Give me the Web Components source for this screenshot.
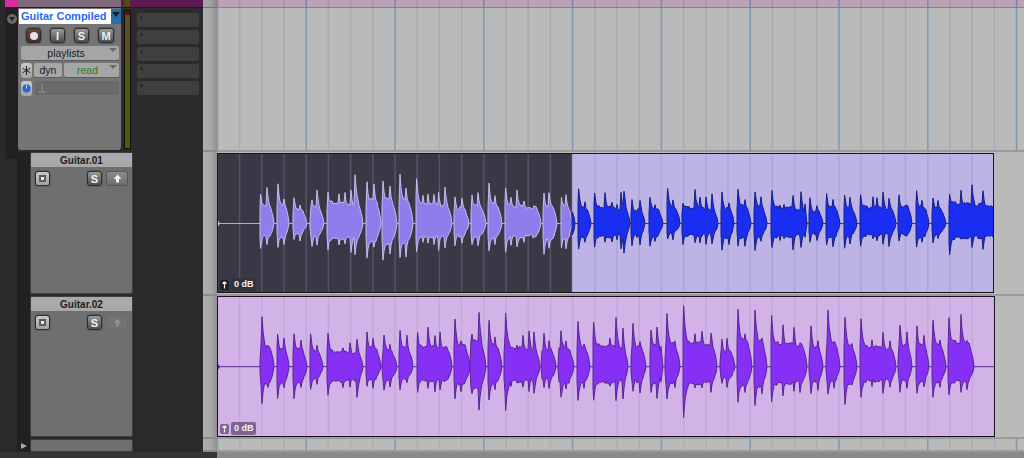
<!DOCTYPE html>
<html>
<head>
<meta charset="utf-8">
<style>
    html, body { margin: 0; padding: 0; background: #2a2a2a; overflow: hidden; }
</style>
</head>
<body>
<edit-window>
    <top-strip></top-strip>

    <track-row style="--row-height: 144px">
        <main-track slot="head" name="Guitar Compiled"></main-track>
        <grid-lines slot="lane" major="#7f9bb3" minor="#a7adb3"></grid-lines>
    </track-row>

    <track-row style="--row-height: 144px">
        <sub-track slot="head" name="Guitar.01" tail></sub-track>
        <audio-clip slot="lane" wave="one" style="--clip-bottom: 1px; --clip-right: 30px">
            <gain-badge style="--badge-bg: #1f1f24; --label-bg: #34323c"></gain-badge>
        </audio-clip>
    </track-row>

    <track-row style="--row-height: 143px">
        <sub-track slot="head" name="Guitar.02" dim></sub-track>
        <audio-clip slot="lane" wave="two" style="--clip-bottom: 0px; --clip-right: 29px; --clip-top: 0px">
            <gain-badge style="--badge-bg: #7f6491; --label-bg: #7f6491"></gain-badge>
        </audio-clip>
    </track-row>

    <track-row style="--row-height: 13px">
        <mini-head slot="head"></mini-head>
        <grid-lines slot="lane" major="#7f9bb3" minor="#aab0b5"></grid-lines>
    </track-row>

    <bottom-bar></bottom-bar>
</edit-window>

<script>
// grid positions are page x, lanes start at 217
const LANE_X = 217;
const GRID_START = 217.4;
const GRID_STEP = 22.2;

// [start, end, [peak x, up, down], ...]
const WAVES = {
    one: {
        center: 70.5,
        parts: [
            {
                from: 217, to: 572, bg: '#3b3846', grid: '#55526a', fill: '#917cec', stroke: '#c4bbf0', line: '#b4aadf',
                bursts: [
                    [260, 274, [260.6, 30, 25], [267, 35, 20]],
                    [277, 289, [278, 41, 25], [284, 23, 20]],
                    [293, 307, [294, 27, 16], [300, 18, 16]],
                    [310, 324, [312, 23, 22], [317, 32, 20]],
                    [327, 363, [328, 30, 25], [339, 30, 22], [345, 30, 20], [351, 34, 30], [355, 49, 30]],
                    [366, 381, [367, 42, 35], [374, 38, 23]],
                    [382, 397, [383, 44, 37], [390, 37, 30]],
                    [399, 413, [400, 48, 33], [406, 34, 32]],
                    [416, 452, [416.6, 44, 27], [423, 30, 20], [428, 30, 20], [434, 29, 20], [438.5, 33, 27], [445, 35, 23]],
                    [454, 469, [455, 28, 23], [462, 24, 18]],
                    [471, 486, [472, 29, 22], [478, 30, 21]],
                    [488, 502, [489, 39, 27], [495, 26, 20]],
                    [505, 541, [505.6, 34, 27], [511, 27, 22], [517, 35, 25], [524, 22, 18]],
                    [543, 557, [544, 31, 32], [549, 30, 23]],
                    [561, 572, [561.5, 28, 23], [566, 28, 25]]
                ]
            },
            {
                from: 572, to: 994, bg: '#bdb3e5', grid: '#aba5d6', fill: '#1a2ef2', stroke: '#141f86', line: '#3a3a80',
                bursts: [
                    [572, 575, [572.5, 12, 12]],
                    [578, 591, [578.6, 34, 25], [585, 20, 20]],
                    [594, 630, [594.6, 29, 22], [605, 32, 20], [612, 20, 18], [617, 20, 18], [621, 32, 27], [624, 32, 28]],
                    [631, 645, [632, 24, 23], [640, 23, 20]],
                    [649, 663, [650, 28, 23], [655, 18, 17]],
                    [667, 680, [667.6, 35, 15], [673, 22, 15]],
                    [682, 718, [683, 20, 20], [695, 34, 20], [700, 25, 18], [706, 27, 21], [712, 28, 20]],
                    [721, 734, [722, 32, 28], [729, 20, 20]],
                    [737, 751, [738, 36, 23], [745, 23, 22]],
                    [754, 767, [755, 33, 26], [761, 25, 17]],
                    [771, 807, [772, 32, 24], [780, 20, 18], [784, 20, 17], [793, 28, 27], [801, 30, 23], [805, 33, 23]],
                    [809, 823, [810, 26, 20], [817, 17, 16]],
                    [826, 840, [826.6, 31, 22], [833, 24, 23]],
                    [844, 857, [844.6, 27, 23], [850, 25, 19]],
                    [860, 896, [860.6, 28, 22], [873, 27, 17], [877, 25, 17], [883, 33, 22], [889, 26, 22]],
                    [898, 912, [899, 30, 19]],
                    [916, 929, [916.6, 33, 25], [922, 22, 18]],
                    [932, 946, [933, 27, 19], [938, 22, 14]],
                    [949, 999, [949.6, 28, 30], [961, 34, 17], [972, 40, 25], [983, 32, 25]]
                ]
            }
        ]
    },
    two: {
        center: 70.7,
        parts: [
            {
                from: 217, to: 995, bg: '#d1b3e8', grid: '#c3a7da', fill: '#8630f5', stroke: '#5a2496', line: '#5a2496',
                bursts: [
                    [260, 274, [262, 50, 37], [268, 20, 20]],
                    [277, 289, [277.6, 34, 33], [284, 27, 20]],
                    [293, 307, [294, 34, 32], [301, 25, 20]],
                    [310, 323, [310.6, 32, 22], [317, 20, 16]],
                    [327, 363, [328, 32, 27], [343, 18, 20], [350, 25, 21], [357, 27, 30]],
                    [366, 381, [367, 35, 20], [373, 28, 20]],
                    [382, 397, [384, 32, 23], [390, 22, 20]],
                    [399, 413, [400, 35, 22], [407, 30, 17]],
                    [417, 452, [417.6, 33, 25], [428, 40, 22], [435, 30, 24], [440, 35, 25]],
                    [454, 470, [455, 49, 33], [461, 25, 24]],
                    [470, 486, [472, 33, 28], [479, 53, 42]],
                    [488, 502, [489, 45, 33], [495, 28, 22]],
                    [504, 540, [505.6, 52, 42], [511, 20, 20], [517, 23, 18], [523, 30, 20], [529, 37, 25], [534, 33, 26]],
                    [541, 556, [544, 34, 22], [549, 25, 20]],
                    [558, 574, [561, 37, 32], [566, 25, 22]],
                    [577, 590, [578, 44, 33], [584, 22, 20]],
                    [593, 628, [593.6, 43, 32], [605, 22, 18], [610, 27, 18], [616, 50, 35], [623, 38, 32]],
                    [631, 646, [633, 44, 26], [640, 25, 25]],
                    [650, 663, [651, 37, 25], [657, 38, 30], [661, 33, 25]],
                    [665, 680, [667, 52, 32], [675, 27, 22]],
                    [683, 717, [683.6, 60, 50], [695, 33, 22], [702, 35, 20], [711, 35, 24]],
                    [720, 735, [722, 28, 18], [727, 27, 20]],
                    [737, 752, [738, 59, 36], [745, 32, 25]],
                    [754, 767, [755, 58, 38], [762, 28, 27]],
                    [771, 807, [771.6, 50, 35], [783, 43, 30], [794, 40, 25], [800, 25, 24]],
                    [809, 823, [811, 42, 28], [818, 25, 22]],
                    [826, 840, [828, 57, 28], [834, 25, 20]],
                    [844, 857, [845, 48, 36], [852, 22, 20]],
                    [860, 896, [861, 47, 30], [872, 28, 20], [883, 36, 28], [890, 25, 20]],
                    [898, 912, [900, 43, 26], [907, 33, 20]],
                    [916, 929, [917, 41, 28], [924, 31, 20]],
                    [932, 946, [933, 48, 30], [940, 25, 20]],
                    [948, 974, [949, 48, 27], [961, 53, 27], [967, 25, 22]]
                ]
            }
        ]
    }
};

// fixed noise so every run gives the same wave
function jitter(x) {
    return Math.sin(x * 12.9898) * 43758.5453 % 1;
}

function burstHeight(burst, x, side) {
    const [x0, x1, ...peaks] = burst;
    const avg = peaks.reduce((sum, p) => sum + p[side], 0) / peaks.length;
    const span = x1 - x0;
    const t = (x - x0) / span;
    const attack = Math.min(1, Math.max(0, (x - x0) / 0.7));
    const taper = Math.pow(Math.min(1, Math.max(0, (x1 - x) / Math.min(5, span * 0.32))), 0.6);
    let h = avg * 0.62 * attack * (1 - 0.15 * t);
    for (const p of peaks) {
        const dx = x - p[0];
        const spike = dx < 0
            ? Math.exp(dx / 1.1)
            : 0.3 * Math.exp(-dx / 1.1) + 0.7 * Math.exp(-dx / 7);
        h = Math.max(h, p[side] * spike);
    }
    return Math.max(0, (h + jitter(Math.round(x) + side) * 1.8) * taper);
}

function burstPath(burst, center) {
    const [x0, x1, ...peaks] = burst;
    const xs = peaks.map(p => p[0]);
    for (let x = Math.ceil(x0); x <= x1; x++) {
        if (!xs.some(px => Math.abs(px - x) < 0.5)) xs.push(x);
    }
    xs.sort((a, b) => a - b);
    const top = [];
    const bottom = [];
    for (const x of xs) {
        const px = (x - LANE_X).toFixed(1);
        top.push(px + ' ' + (center - burstHeight(burst, x, 1)).toFixed(1));
        bottom.unshift(px + ' ' + (center + burstHeight(burst, x, 2)).toFixed(1));
    }
    return 'M' + top.join('L') + 'L' + bottom.join('L') + 'Z';
}

function gridXs(width) {
    const out = [];
    for (let k = 0; GRID_START + k * GRID_STEP - LANE_X < width; k++) {
        out.push({ x: GRID_START + k * GRID_STEP - LANE_X, major: k % 4 === 0 });
    }
    return out;
}

class EditWindow extends HTMLElement {
    constructor() {
        super();
        this.attachShadow({ mode: 'open' }).innerHTML = `
<style>
    :host {
        display: flex;
        flex-direction: column;
        width: 1024px;
        height: 458px;
        overflow: hidden;
        background: #2a2a2a;
        font-family: "Liberation Sans", Arial, sans-serif;
    }
</style>
<slot></slot>`;
    }
}

class TopStrip extends HTMLElement {
    constructor() {
        super();
        this.attachShadow({ mode: 'open' }).innerHTML = `
<style>
    :host {
        display: grid;
        grid-template-columns: 5px 13px 103px 3px 6px 73px 14px 1fr;
        height: 8px;
        flex: none;
    }
    div { border-bottom: 1px solid #2c1a2a; }
    .sep { background: linear-gradient(90deg, #a8a8a8, #a0a0a0 60%, #858585); border-bottom-color: #777; }
    .lane { position: relative; background: #b8a4b4; border-bottom-color: #8d7f8a; }
    grid-lines { position: absolute; inset: 0; }
</style>
<div style="background:#2a2a2a;border:0"></div>
<div style="background:#d92ea2"></div>
<div style="background:#7f6a7d"></div>
<div style="background:#5e1a52"></div>
<div style="background:#4c5208;border-bottom-color:#111"></div>
<div style="background:#5e1a52"></div>
<div class="sep"></div>
<div class="lane"><grid-lines major="#7f86a8" minor="#a493a8"></grid-lines></div>`;
    }
}

class TrackRow extends HTMLElement {
    constructor() {
        super();
        this.attachShadow({ mode: 'open' }).innerHTML = `
<style>
    :host {
        display: grid;
        grid-template-columns: 203px 14px 1fr;
        height: var(--row-height, 144px);
        flex: none;
    }
    .sep {
        background: linear-gradient(90deg, #afafaf, #a6a6a6 60%, #909090);
        border-bottom: 2px solid #8a8a8a;
    }
    .lane { display: block; position: relative; background: #bababa; border-bottom: 2px solid #9a9a9a; }
    ::slotted(grid-lines) { position: absolute; inset: 0; }
</style>
<slot name="head"></slot>
<div class="sep"></div>
<div class="lane"><slot name="lane"></slot></div>`;
    }
}

class GridLines extends HTMLElement {
    connectedCallback() {
        const major = this.getAttribute('major');
        const minor = this.getAttribute('minor');
        const lines = gridXs(807).map(g =>
            `<line x1="${g.x}" x2="${g.x}" y1="0" y2="200" stroke="${g.major ? major : minor}" stroke-width="1.6"/>`
        ).join('');
        this.attachShadow({ mode: 'open' }).innerHTML = `
<style>
    :host { display: block; overflow: hidden; }
    svg { display: block; width: 807px; height: 100%; }
</style>
<svg preserveAspectRatio="none">${lines}</svg>`;
    }
}

class AudioClip extends HTMLElement {
    connectedCallback() {
        const data = WAVES[this.getAttribute('wave')];
        let body = '';
        for (const part of data.parts) {
            const x = part.from - LANE_X;
            const w = part.to - part.from;
            body += `<rect x="${x}" y="0" width="${w}" height="145" fill="${part.bg}"/>`;
            for (const g of gridXs(807)) {
                if (g.x > x && g.x < x + w) {
                    body += `<line x1="${g.x}" x2="${g.x}" y1="0" y2="145" stroke="${part.grid}" stroke-width="1.5"/>`;
                }
            }
            body += `<line x1="${x}" x2="${x + w}" y1="${data.center}" y2="${data.center}" stroke="${part.line}" stroke-width="1"/>`;
            for (const burst of part.bursts) {
                body += `<path d="${burstPath(burst, data.center)}" fill="${part.fill}" stroke="${part.stroke}" stroke-width="1" stroke-linejoin="round"/>`;
            }
        }
        this.attachShadow({ mode: 'open' }).innerHTML = `
<style>
    :host {
        display: block;
        position: relative;
        height: calc(100% - var(--clip-bottom, 2px) - var(--clip-top, 1px));
        margin: var(--clip-top, 1px) var(--clip-right, 30px) 0 0;
        box-sizing: border-box;
        border: 1px solid #19171d;
        overflow: hidden;
    }
    svg { position: absolute; left: -1px; top: -1px; width: 807px; height: 145px; }
    .label { position: absolute; left: 2px; bottom: 1px; }
</style>
<svg>${body}<path d="M1 ${data.center - 3}L3 ${data.center}L1 ${data.center + 3}Z" fill="${data.parts[0].stroke}"/></svg>
<div class="label"><slot></slot></div>`;
    }
}

class GainBadge extends HTMLElement {
    constructor() {
        super();
        this.attachShadow({ mode: 'open' }).innerHTML = `
<style>
    :host { display: flex; align-items: center; gap: 2px; color: #f4f4f4; font: bold 9px "Liberation Sans", sans-serif; }
    .mic {
        display: flex;
        width: 9px;
        height: 10px;
        border-radius: 2px;
        background: var(--badge-bg);
    }
    .gain {
        padding: 1px 2px 1px 3px;
        line-height: 11px;
        border-radius: 2px;
        background: var(--label-bg);
    }
    svg { display: block; margin: auto; }
</style>
<span class="mic"><svg width="7" height="8" viewBox="0 0 7 8"><path d="M3.5 .4a2 1.6 0 0 1 2 1.6v1H4.1v4.6H2.9V3H1.5V2a2 1.6 0 0 1 2-1.6z" fill="#eee"/></svg></span>
<span class="gain">0 dB</span>`;
    }
}

class ToolBtn extends HTMLElement {
    constructor() {
        super();
        this.attachShadow({ mode: 'open' }).innerHTML = `
<style>
    :host {
        display: flex;
        align-items: center;
        justify-content: center;
        box-sizing: border-box;
        width: var(--btn-width, 15px);
        height: 15px;
        flex: none;
        border: 1px solid #2f2f2f;
        border-radius: 3px;
        color: #f0f0f0;
        font: bold 11px "Liberation Sans", sans-serif;
        background: linear-gradient(#9c9c9c, #6d6d6d 55%, #4f4f4f);
        box-shadow: 0 0 0 1px #5d5d5d;
    }
    :host([kind="rec"]) { background: linear-gradient(#6e4440, #4f2a27); }
    :host([kind="plain"]) { background: linear-gradient(#c9c9c9, #a3a3a3); }
    :host([kind="soft"]) { border-color: #555; box-shadow: none; background: linear-gradient(#8c8c8c, #6c6c6c); }
    :host([kind="off"]) { border-color: #6a6a6a; box-shadow: none; background: #737373; color: #8d8d8d; }
</style>
<slot></slot>`;
    }
}

class DropBox extends HTMLElement {
    constructor() {
        super();
        this.attachShadow({ mode: 'open' }).innerHTML = `
<style>
    :host {
        display: flex;
        align-items: center;
        justify-content: center;
        position: relative;
        box-sizing: border-box;
        height: 14px;
        flex: var(--box-flex, 1);
        border-radius: 2px;
        background: #a6a6a6;
        color: var(--box-color, #1c1c1c);
        font: 10.5px "Liberation Sans", sans-serif;
        box-shadow: 0 1px 0 #5c5c5c;
    }
    :host([arrow]) { padding-right: 8px; }
    :host([arrow])::after {
        content: "";
        position: absolute;
        right: 2px;
        top: 2px;
        border: 4px solid transparent;
        border-top: 4px solid #6a6a6a;
        border-bottom: 0;
    }
</style>
<slot></slot>`;
    }
}

class MainTrack extends HTMLElement {
    connectedCallback() {
        const name = this.getAttribute('name');
        this.attachShadow({ mode: 'open' }).innerHTML = `
<style>
    :host {
        display: grid;
        grid-template-columns: 5px 13px 103px 12px 70px;
        height: 100%;
    }
    .gutter { background: #212121; display: flex; justify-content: center; padding-top: 4px; }
    .collapse {
        display: flex;
        width: 10px;
        height: 10px;
        margin-top: 2px;
        border-radius: 50%;
        background: #6a6a6a;
        align-items: center;
        justify-content: center;
    }
    .collapse::after { content: ""; border: 3.5px solid transparent; border-top: 4px solid #222; border-bottom: 0; }
    .panel {
        display: flex;
        flex-direction: column;
        box-sizing: border-box;
        height: 142px;
        padding: 1px 0 0 1px;
        background: #757575;
        border-radius: 0 0 3px 3px;
    }
    .name { display: flex; height: 15px; }
    .title {
        flex: 1;
        padding-left: 2px;
        background: #fff;
        color: #1f6bf0;
        font: bold 11px/15px "Liberation Sans", sans-serif;
        white-space: nowrap;
    }
    .menu { width: 10px; background: #2a6ca8; display: flex; justify-content: center; padding-top: 3px; box-sizing: border-box; }
    .menu::after { content: ""; height: 0; border: 4px solid transparent; border-top: 5px solid #17222c; border-bottom: 0; }
    .btns { display: flex; gap: 9px; padding: 4px 0 0 7px; }
    .rows { display: flex; flex-direction: column; gap: 3px; padding: 3px 2px 0 2px; }
    .row { display: flex; gap: 2px; }
    .dot { width: 8px; height: 8px; border-radius: 50%; background: #e4e4e4; }
    .auto { flex: 1; height: 14px; margin-left: 1px; border-radius: 2px; background: #6a6a6a; display: flex; align-items: center; padding-left: 3px; }
    .meter-wrap { display: flex; justify-content: center; padding-top: 2px; }
    .meter {
        box-sizing: border-box;
        width: 7px;
        height: 139px;
        border: 1px solid #0e0e0e;
        border-radius: 1px;
        background: linear-gradient(#5e1212 0, #5e1212 4px, #5b4f1f 4px, #5b4f1f 58px, #4d5a08 58px);
    }
    .inserts { display: flex; flex-direction: column; gap: 3px; padding: 5px 4px 0; background: #2b2b2b; }
    .slot { height: 14px; border-radius: 2px; background: #3f3f3f; position: relative; }
    .slot::before { content: ""; position: absolute; left: 3px; top: 3px; width: 3px; height: 3px; border-radius: 50%; background: #2a2a2a; }
</style>
<div style="background:#2a2a2a"></div>
<div class="gutter"><span class="collapse"></span></div>
<div class="panel">
    <div class="name"><div class="title">${name}</div><div class="menu"></div></div>
    <div class="btns">
        <tool-btn kind="rec"><span class="dot"></span></tool-btn>
        <tool-btn>I</tool-btn>
        <tool-btn>S</tool-btn>
        <tool-btn style="--btn-width: 16px">M</tool-btn>
    </div>
    <div class="rows">
        <div class="row"><drop-box arrow>playlists</drop-box></div>
        <div class="row">
            <tool-btn kind="plain" style="--btn-width: 11px; border: 0; box-shadow: none">
                <svg width="9" height="9" viewBox="0 0 9 9" stroke="#222" stroke-width="1"><path d="M4.5 0v9M.6 2.2l7.8 4.6M.6 6.8l7.8-4.6"/></svg>
            </tool-btn>
            <drop-box style="--box-flex: 0 0 28px">dyn</drop-box>
            <drop-box arrow style="--box-color: #2e7d1c">read</drop-box>
        </div>
        <div class="row">
            <tool-btn kind="plain" style="--btn-width: 11px; border: 0; box-shadow: none">
                <svg width="9" height="9" viewBox="0 0 9 9"><circle cx="4.5" cy="4.5" r="4" fill="#2c62e0"/><path d="M4.5 1.5v3" stroke="#dfe8ff" stroke-width="1"/></svg>
            </tool-btn>
            <div class="auto"><svg width="8" height="9" viewBox="0 0 8 9"><path d="M3.4 0h1.2v7H3.4zM.5 7.2h7V8.4h-7z" fill="#8e8e8e"/></svg></div>
        </div>
    </div>
</div>
<div class="meter-wrap"><div class="meter"></div></div>
<div class="inserts"><div class="slot"></div><div class="slot"></div><div class="slot"></div><div class="slot"></div><div class="slot"></div></div>`;
    }
}

class SubTrack extends HTMLElement {
    connectedCallback() {
        const name = this.getAttribute('name');
        const dim = this.hasAttribute('dim');
        const tail = this.hasAttribute('tail');
        this.attachShadow({ mode: 'open' }).innerHTML = `
<style>
    :host {
        display: grid;
        grid-template-columns: 17px 13px 103px 70px;
        height: 100%;
    }
    .tail { margin-left: 5px; height: 7px; background: #212121; border-radius: 0 0 0 3px; }
    .strip { background: #212121; }
    .panel {
        box-sizing: border-box;
        height: calc(100% - 2px);
        border: 1px solid #3d3d3d;
        border-radius: 2px;
        background: #6f6f6f;
    }
    .title {
        height: 14px;
        background: #a9a9a9;
        color: #1d1d22;
        font: bold 10px/15px "Liberation Sans", sans-serif;
        text-align: center;
    }
    .btns { display: flex; padding: 4px 4px 0 4px; }
    .grow { flex: 1; }
    .gap { width: 4px; }
    .ring { width: 7px; height: 7px; box-sizing: border-box; border: 2px solid #5a5a5a; background: #eee; }
</style>
<div>${tail ? '<div class="tail"></div>' : ''}</div>
<div class="strip"></div>
<div class="panel">
    <div class="title">${name}</div>
    <div class="btns">
        <tool-btn kind="plain"><span class="ring"></span></tool-btn>
        <span class="grow"></span>
        <tool-btn>S</tool-btn>
        <span class="gap"></span>
        <tool-btn kind="${dim ? 'off' : 'soft'}" style="--btn-width: 22px">
            <svg width="9" height="9" viewBox="0 0 9 9"><path d="M4.5.5L8.5 5H6v3.5H3V5H.5z" fill="${dim ? '#8f8f8f' : '#f0f0f0'}"/></svg>
        </tool-btn>
    </div>
</div>`;
    }
}

class MiniHead extends HTMLElement {
    constructor() {
        super();
        this.attachShadow({ mode: 'open' }).innerHTML = `
<style>
    :host { display: grid; grid-template-columns: 17px 13px 103px 70px; height: 100%; }
    .strip { background: #212121; display: flex; align-items: center; justify-content: center; border-radius: 0 0 0 3px; }
    .strip::after { content: ""; border: 3.5px solid transparent; border-left: 6px solid #a8a8a8; border-right: 0; }
    .panel { box-sizing: border-box; border: 1px solid #3d3d3d; border-radius: 2px; background: #6f6f6f; }
</style>
<div></div>
<div class="strip"></div>
<div class="panel"></div>`;
    }
}

class BottomBar extends HTMLElement {
    constructor() {
        super();
        this.attachShadow({ mode: 'open' }).innerHTML = `
<style>
    :host { display: grid; grid-template-columns: 217px 1fr; flex: 1; }
    .lane { background: #8a8a8a; }
    .left { background: #343434; }
</style>
<div class="left"></div>
<div class="lane"></div>`;
    }
}

customElements.define('grid-lines', GridLines);
customElements.define('gain-badge', GainBadge);
customElements.define('tool-btn', ToolBtn);
customElements.define('drop-box', DropBox);
customElements.define('audio-clip', AudioClip);
customElements.define('main-track', MainTrack);
customElements.define('sub-track', SubTrack);
customElements.define('mini-head', MiniHead);
customElements.define('bottom-bar', BottomBar);
customElements.define('top-strip', TopStrip);
customElements.define('track-row', TrackRow);
customElements.define('edit-window', EditWindow);
</script>
</body>
</html>
